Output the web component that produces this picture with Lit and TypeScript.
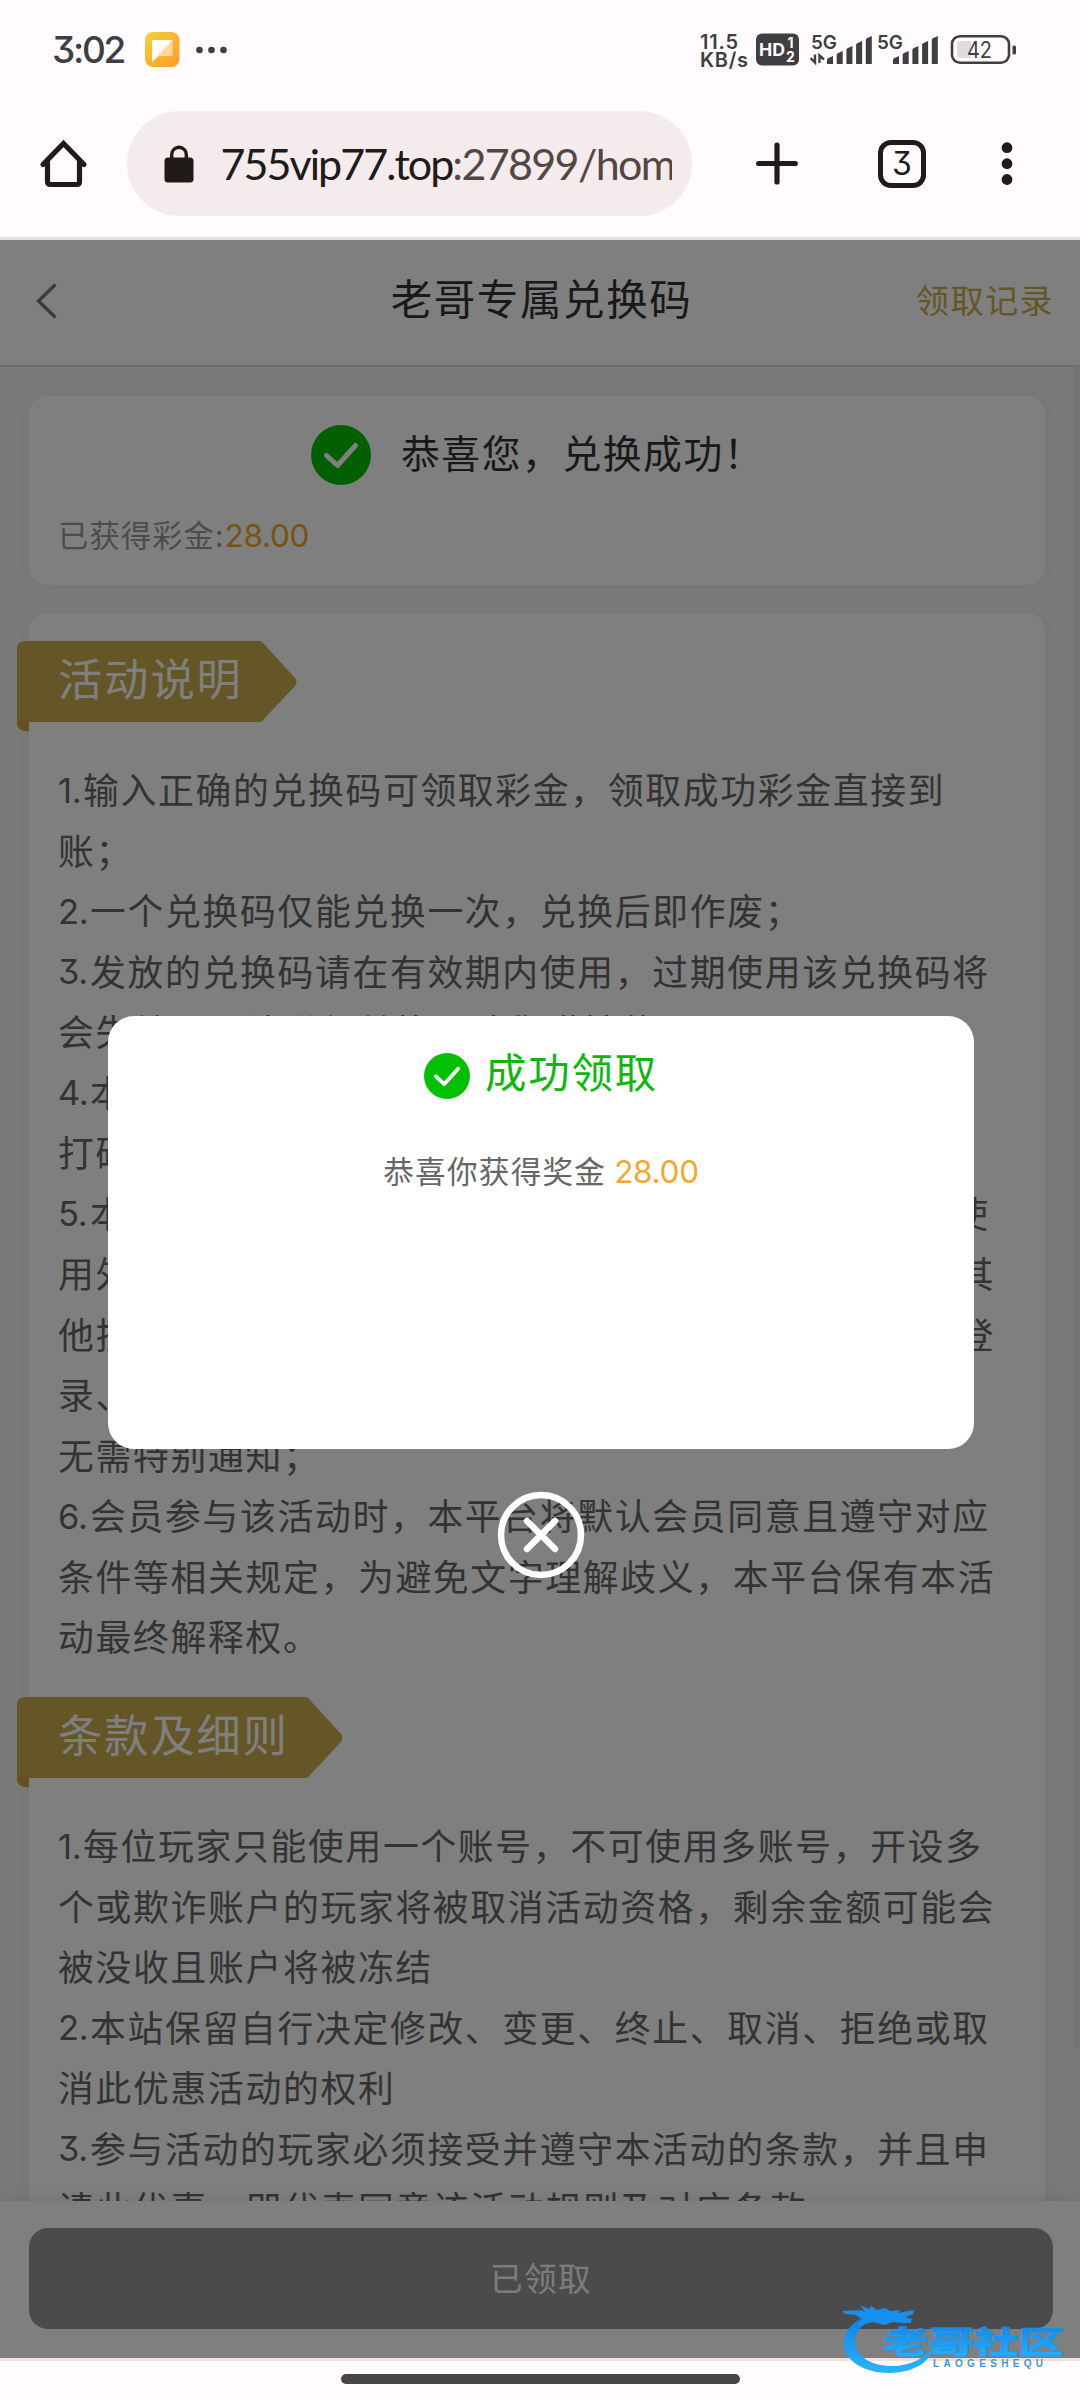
import { LitElement, html, css, svg } from "lit";
import { customElement, property } from "lit/decorators.js";

interface Line {
  no?: string;
  text: string;
}

const RULES: Line[] = [
  { no: "1.", text: "输入正确的兑换码可领取彩金，领取成功彩金直接到" },
  { text: "账；" },
  { no: "2.", text: "一个兑换码仅能兑换一次，兑换后即作废；" },
  { no: "3.", text: "发放的兑换码请在有效期内使用，过期使用该兑换码将" },
  { text: "会失效，无法进行兑换，请您谨慎使用；" },
  { no: "4.", text: "本活动所得彩金需完成一倍有效投注即可申请提款、" },
  { text: "打码不限游戏平台；" },
  { no: "5.", text: "本活动仅限账号本人进行正常的人为操作，禁止租借使" },
  { text: "用外挂、机器人、不同账号对赌、互刷、套利、协议或其" },
  { text: "他技术手段参与，否则平台有权取消奖励并冻结账号、登" },
  { text: "录、甚至拉入黑名单，" },
  { text: "无需特别通知；" },
  { no: "6.", text: "会员参与该活动时，本平台将默认会员同意且遵守对应" },
  { text: "条件等相关规定，为避免文字理解歧义，本平台保有本活" },
  { text: "动最终解释权。" },
];

const TERMS: Line[] = [
  { no: "1.", text: "每位玩家只能使用一个账号，不可使用多账号，开设多" },
  { text: "个或欺诈账户的玩家将被取消活动资格，剩余金额可能会" },
  { text: "被没收且账户将被冻结" },
  { no: "2.", text: "本站保留自行决定修改、变更、终止、取消、拒绝或取" },
  { text: "消此优惠活动的权利" },
  { no: "3.", text: "参与活动的玩家必须接受并遵守本活动的条款，并且申" },
  { text: "请此优惠，即代表同意该活动规则及对应条款。" },
];

@customElement("status-bar")
class StatusBar extends LitElement {
  static styles = css`
    :host { display: flex; align-items: center; height: 100px; padding: 0 60px 0 52px; color: #3f3e41; }
    .time { font: 500 37px/44px Inter, sans-serif; font-feature-settings: "cv09"; letter-spacing: -2.300px; width: 93px; }
    .dots { margin-left: 16px; }
    .icons { margin-left: auto; }
    svg { display: block; }
    .lbl { font-family: Inter, sans-serif; font-weight: 600; fill: #3f3e41; }
    .inv { fill: #fffbff; font-weight: 700; }
    .lvl { font-weight: 400; }
  `;

  private bars(x: number) {
    return [0, 1, 2, 3, 4].map(
      (i) => svg`<path d="M${x + i * 9.7} 64V${60 - i * 5}q0-1.5 1.5-2l4.5-2V64z" fill="#3f3e41"/>`
    );
  }

  render() {
    return html`
      <div class="time">3:02</div>
      <svg width="35" height="36" viewBox="0 0 35 36">
        <defs>
          <linearGradient id="g" x1="0" y1="0" x2="1" y2="1">
            <stop offset="0" stop-color="#f2d238" /><stop offset="1" stop-color="#ff9a2c" />
          </linearGradient>
        </defs>
        <rect width="34.500" height="35" rx="8" fill="url(#g)" />
        <path d="M7 8h20.500v16H14.500L7 30z" fill="#ffd9a0" />
        <path d="M7 8h20.500L7 29.500z" fill="#fffdf5" />
      </svg>
      <svg class="dots" width="31" height="8" viewBox="0 0 31 8" fill="#3f3e41">
        <circle cx="3.500" cy="4" r="3.300" /><circle cx="15.500" cy="4" r="3.300" /><circle cx="27.500" cy="4" r="3.300" />
      </svg>
      <svg class="icons" width="320" height="100" viewBox="700 0 320 100">
        <text class="lbl" x="700" y="49" font-size="20" textLength="38">11.5</text>
        <text class="lbl" x="700" y="67" font-size="20" textLength="48">KB/s</text>
        <rect x="756" y="33.500" width="43" height="32" rx="6" fill="#3f3e41" />
        <text class="lbl inv" x="759" y="56" font-size="17.500" textLength="26" lengthAdjust="spacingAndGlyphs">HD</text>
        <text class="lbl inv" x="787.500" y="48" font-size="14">1</text>
        <text class="lbl inv" x="786" y="62" font-size="14">2</text>
        <text class="lbl" x="811" y="48.500" font-size="19" textLength="26" lengthAdjust="spacingAndGlyphs">5G</text>
        <path d="M815 54.500V62.500L810.500 58M819.500 63V55.500L824 59.500" fill="none" stroke="#3f3e41" stroke-width="2.400" />
        ${this.bars(827)}
        <text class="lbl" x="877" y="48.500" font-size="19" textLength="26" lengthAdjust="spacingAndGlyphs">5G</text>
        ${this.bars(893)}
        <rect x="952" y="36.200" width="57" height="26.500" rx="8" fill="none" stroke="#3f3e41" stroke-width="2.600" />
        <path d="M960 41h11v17h-11q-3 0-3-3V44q0-3 3-3z" fill="#dfdce0" />
        <rect x="1012.500" y="45.500" width="3.500" height="9" rx="1.500" fill="#3f3e41" />
        <text class="lbl lvl" x="967" y="58" font-size="23" textLength="25" lengthAdjust="spacingAndGlyphs">42</text>
      </svg>
    `;
  }
}

@customElement("browser-bar")
class BrowserBar extends LitElement {
  static styles = css`
    :host { display: flex; align-items: flex-start; height: 140px; padding: 11px 0 0 39px; box-sizing: border-box; border-bottom: 3px solid #ebdeda; }
    svg { display: block; flex: none; }
    .home { margin: 28px 38.500px 0 0; }
    .pill { display: flex; align-items: center; box-sizing: border-box; width: 565px; height: 105px; border-radius: 53px; background: #f4ebec; padding: 0 20px 0 37px; }
    .url { margin-left: 27px; width: 451px; overflow: hidden; white-space: nowrap; font: 43px/56px Lato, sans-serif; letter-spacing: -1.950px; color: #201a19; }
    .rest { color: #534744; letter-spacing: -1.650px; }
    .plus { margin: 31px 0 0 64.500px; }
    .tabs { margin: 29px 0 0 80px; box-sizing: border-box; width: 48px; height: 48px; border: 5.500px solid #201a19; border-radius: 13px; display: flex; align-items: center; justify-content: center; font: 32px/36px Inter, sans-serif; font-feature-settings: "cv09"; color: #201a19; }
    .more { margin: 31px 0 0 75px; }
  `;
  render() {
    return html`
      <svg class="home" width="49" height="50" viewBox="0 0 49 50">
        <path d="M4 25.500L24.500 4.500L45 25.500M8.500 23V42.500Q8.500 45.500 11.500 45.500H37.500Q40.500 45.500 40.500 42.500V23" fill="none" stroke="#201a19" stroke-width="5.200" stroke-linecap="round" stroke-linejoin="miter" />
      </svg>
      <div class="pill">
        <svg width="30" height="38" viewBox="0 0 30 38">
          <rect x="0.500" y="12.500" width="29" height="25" rx="3.500" fill="#201a19" />
          <path d="M7.700 14V9.500a7.300 7.300 0 0 1 14.600 0V14" fill="none" stroke="#201a19" stroke-width="3.400" />
        </svg>
        <div class="url">755vip77.top<span class="rest">:27899/home</span></div>
      </div>
      <svg class="plus" width="42" height="43" viewBox="0 0 42 43">
        <path d="M21 3v37M2.700 21.500h36.600" stroke="#201a19" stroke-width="5.200" stroke-linecap="round" />
      </svg>
      <div class="tabs">3</div>
      <svg class="more" width="12" height="44" viewBox="0 0 12 44" fill="#201a19">
        <circle cx="6" cy="5.700" r="5.400" /><circle cx="6" cy="21.700" r="5.400" /><circle cx="6" cy="37.500" r="5.400" />
      </svg>
    `;
  }
}

@customElement("check-mark")
class CheckMark extends LitElement {
  @property({ type: Number }) size = 60;
  static styles = css`
    :host { display: block; flex: none; }
    svg { display: block; }
  `;
  render() {
    return html`<svg width=${this.size} height=${this.size} viewBox="0 0 60 60">
      <circle cx="30" cy="30" r="30" fill="#04c004" />
      <path d="M15.500 30.500L26.500 40.500L44.500 20.500" fill="none" stroke="#fff" stroke-width="5" stroke-linecap="round" stroke-linejoin="round" />
    </svg>`;
  }
}

@customElement("rule-section")
class RuleSection extends LitElement {
  @property() heading = "";
  @property({ type: Number }) ribbon = 280;
  @property({ attribute: false }) lines: Line[] = [];
  static styles = css`
    :host { display: block; }
    .ribbon { display: grid; margin-left: -12px; height: 90px; }
    .ribbon > * { grid-area: 1 / 1; }
    .shape { display: block; }
    .title { font-size: 44.200px; line-height: 81px; letter-spacing: 2px; color: #fff; padding-left: 41px; margin-top: -4px; }
    .body { padding: 27px 0 0 29px; color: #666; }
    .line { display: flex; height: 60.500px; line-height: 60.500px; font-size: 35.800px; letter-spacing: 1.690px; white-space: nowrap; }
    .no { font-family: Inter, sans-serif; font-feature-settings: "cv09"; font-size: 34.500px; letter-spacing: -0.3px; width: 32px; margin-top: 2.500px; }
    .no.one { width: 25px; }
  `;
  render() {
    const w = this.ribbon;
    const s = w - 37;
    return html`
      <div class="ribbon">
        <svg class="shape" width=${w} height="90" viewBox="0 0 ${w} 90">
          <path d="M0 8Q0 0 8 0H${s}Q${s + 2} 0 ${s + 4} 3L${w - 2} 37Q${w + 1} 41 ${w - 2} 45L${s + 4} 78Q${s + 2} 81 ${s} 81H12V90H10Q0 90 0 81Z" fill="#cbad50" />
          <path d="M0 81H12V90H10Q0 90 0 81Z" fill="#c9a244" />
        </svg>
        <div class="title">${this.heading}</div>
      </div>
      <div class="body">
        ${this.lines.map(
          (l) => html`<div class="line">${l.no ? html`<span class="no ${l.no === "1." ? "one" : ""}">${l.no}</span>` : ""}<span>${l.text}</span></div>`
        )}
      </div>
    `;
  }
}

@customElement("site-badge")
class SiteBadge extends LitElement {
  static styles = css`
    :host { display: block; }
    svg { display: block; }
    .cn { font: 900 43px "Noto Sans CJK SC", sans-serif; fill: url(#b); stroke: #1b96ee; stroke-width: 0.800px; }
    .en { font: 700 10px "Liberation Sans", sans-serif; fill: #3f97dd; }
  `;
  render() {
    return html`<svg width="230" height="80" viewBox="840 2300 230 80">
      <defs>
        <linearGradient id="b" x1="0" y1="0" x2="0" y2="1">
          <stop offset="0" stop-color="#0a7fe6" /><stop offset="1" stop-color="#2db4fb" />
        </linearGradient>
      </defs>
      <path d="M869 2315C852 2321 843 2332 844 2346C846 2362 866 2373 889 2373C913 2373 932 2362 934 2345C926 2358 911 2366 892 2366C871 2366 855 2356 855 2341C855 2331 862 2323 876 2320Z" fill="url(#b)" />
      <path d="M842 2311L861 2310L865 2312L860 2305L869 2309L871 2306L877 2310L885 2308L890 2311L901 2310L897 2313L914 2310L913 2314L905 2317L912 2319L911 2323L902 2323L893 2322L884 2325L873 2322L858 2326L862 2319L856 2315L845 2314Z" fill="#1590ee" />
      <g transform="translate(882 2353.500) skewX(-3) scale(1.075 0.740)">
        <text class="cn" x="0" y="0" textLength="169">老哥社区</text>
      </g>
      <text class="en" x="933" y="2366.500" textLength="110">LAOGESHEQU</text>
    </svg>`;
  }
}

@customElement("app-root")
class AppRoot extends LitElement {
  static styles = css`
    :host { display: block; position: relative; width: 1080px; height: 2400px; overflow: hidden; background: #fffbff; font-family: "Noto Sans CJK SC", sans-serif; }
    .page { position: relative; display: flex; flex-direction: column; box-sizing: border-box; height: 2121px; border-bottom: 3px solid #efe0db; background: #f5f5f5; overflow: hidden; }
    .head { flex: none; box-sizing: border-box; height: 127px; display: grid; grid-template-columns: 1fr auto 1fr; align-items: center; padding: 0 27px 3px 35px; background: #fff; border-bottom: 2px solid #dcdcdc; white-space: nowrap; }
    .title { font-size: 41.500px; line-height: 60px; letter-spacing: 1.600px; color: #333; margin-top: -9px; padding-right: 5px; }
    .record { justify-self: end; font-size: 33.200px; letter-spacing: 1.350px; line-height: 50px; color: #cbad50; margin-top: -5px; margin-right: -1px; }
    .back { display: block; }
    .scroll { flex: 1; min-height: 0; overflow: hidden; display: grid; grid-template-columns: 1fr 6px; }
    .list { display: flex; flex-direction: column; gap: 28px; padding: 29px 29px 0; min-height: 0; overflow: hidden; }
    .track { height: 1682px; background: #e9e9e9; }
    .card { background: #fff; border-radius: 18px; box-shadow: 0 0 16px rgba(0, 0, 0, 0.05); flex: none; }
    .won { box-sizing: border-box; height: 189px; padding: 29px 30px; }
    .ok { display: flex; align-items: center; gap: 30px; height: 60px; padding-left: 252px; font-size: 38.800px; letter-spacing: 1.550px; color: #333; white-space: nowrap; }
    .ok span { margin-top: -9px; }
    .sum { display: flex; align-items: center; margin-top: 21.500px; line-height: 50px; font-size: 30.300px; letter-spacing: 1.100px; color: #999; margin-left: -1px; }
    .amount { font: 400 31.500px/50px Inter, sans-serif; letter-spacing: -0.300px; color: #f2a61c; padding-top: 4px; }
    .info { padding-top: 28px; padding-bottom: 60px; }
    .info rule-section + rule-section { margin-top: 31.500px; }
    .foot { flex: none; box-sizing: border-box; height: 157px; padding: 27px 27px 0 29px; background: #fff; box-shadow: 0 -4px 16px rgba(0, 0, 0, 0.08); z-index: 1; }
    .btn { height: 101px; border-radius: 19px; background: #969696; color: #fff; display: flex; align-items: center; justify-content: center; font-size: 32.700px; letter-spacing: 1.300px; }
    .btn span { margin-top: -5px; opacity: 0.95; }
    .mask { position: absolute; inset: 0; background: rgba(0, 0, 0, 0.5); z-index: 2; }
    .dialog { position: absolute; left: 108px; top: 776px; width: 866px; height: 433px; border-radius: 26px; background: #fff; z-index: 3; display: flex; flex-direction: column; align-items: center; box-sizing: border-box; padding-top: 37px; }
    .done { display: flex; align-items: center; gap: 15px; height: 46px; font-size: 41.400px; letter-spacing: 1.800px; color: #0bb80b; }
    .done span { margin-top: -13px; }
    .prize { display: flex; align-items: center; gap: 8px; margin-top: 43.500px; line-height: 50px; font-size: 30.600px; letter-spacing: 1.250px; color: #666; }
    .prize .amount { color: #f0a92e; }
    .close { position: absolute; left: 497px; top: 1251px; z-index: 3; display: block; }
    .nav { display: flex; justify-content: center; padding-top: 13px; }
    .handle { width: 399px; height: 10px; border-radius: 5px; background: #464646; }
    site-badge { position: absolute; left: 840px; top: 2300px; z-index: 5; }
  `;

  render() {
    return html`
      <status-bar></status-bar>
      <browser-bar></browser-bar>
      <main class="page">
        <header class="head">
          <svg class="back" width="22" height="36" viewBox="0 0 22 36">
            <path d="M20.500 1.500L3.500 18L20.500 34.500" fill="none" stroke="#777" stroke-width="3.400" />
          </svg>
          <div class="title">老哥专属兑换码</div>
          <div class="record">领取记录</div>
        </header>
        <div class="scroll">
          <div class="list">
            <section class="card won">
              <div class="ok"><check-mark size="60"></check-mark><span>恭喜您，兑换成功！</span></div>
              <div class="sum">已获得彩金:<span class="amount">28.00</span></div>
            </section>
            <section class="card info">
              <rule-section heading="活动说明" .ribbon=${280} .lines=${RULES}></rule-section>
              <rule-section heading="条款及细则" .ribbon=${326} .lines=${TERMS}></rule-section>
            </section>
          </div>
          <div class="track"></div>
        </div>
        <footer class="foot"><div class="btn"><span>已领取</span></div></footer>
        <div class="mask"></div>
        <div class="dialog" role="dialog">
          <div class="done"><check-mark size="46"></check-mark><span>成功领取</span></div>
          <div class="prize">恭喜你获得奖金<span class="amount">28.00</span></div>
        </div>
        <svg class="close" width="88" height="88" viewBox="0 0 88 88" fill="none" stroke="#fff" stroke-width="6.500" stroke-linecap="round">
          <circle cx="44" cy="44" r="40" /><path d="M30 30L58 58M58 30L30 58" />
        </svg>
      </main>
      <div class="nav"><div class="handle"></div></div>
      <site-badge></site-badge>
    `;
  }
}
